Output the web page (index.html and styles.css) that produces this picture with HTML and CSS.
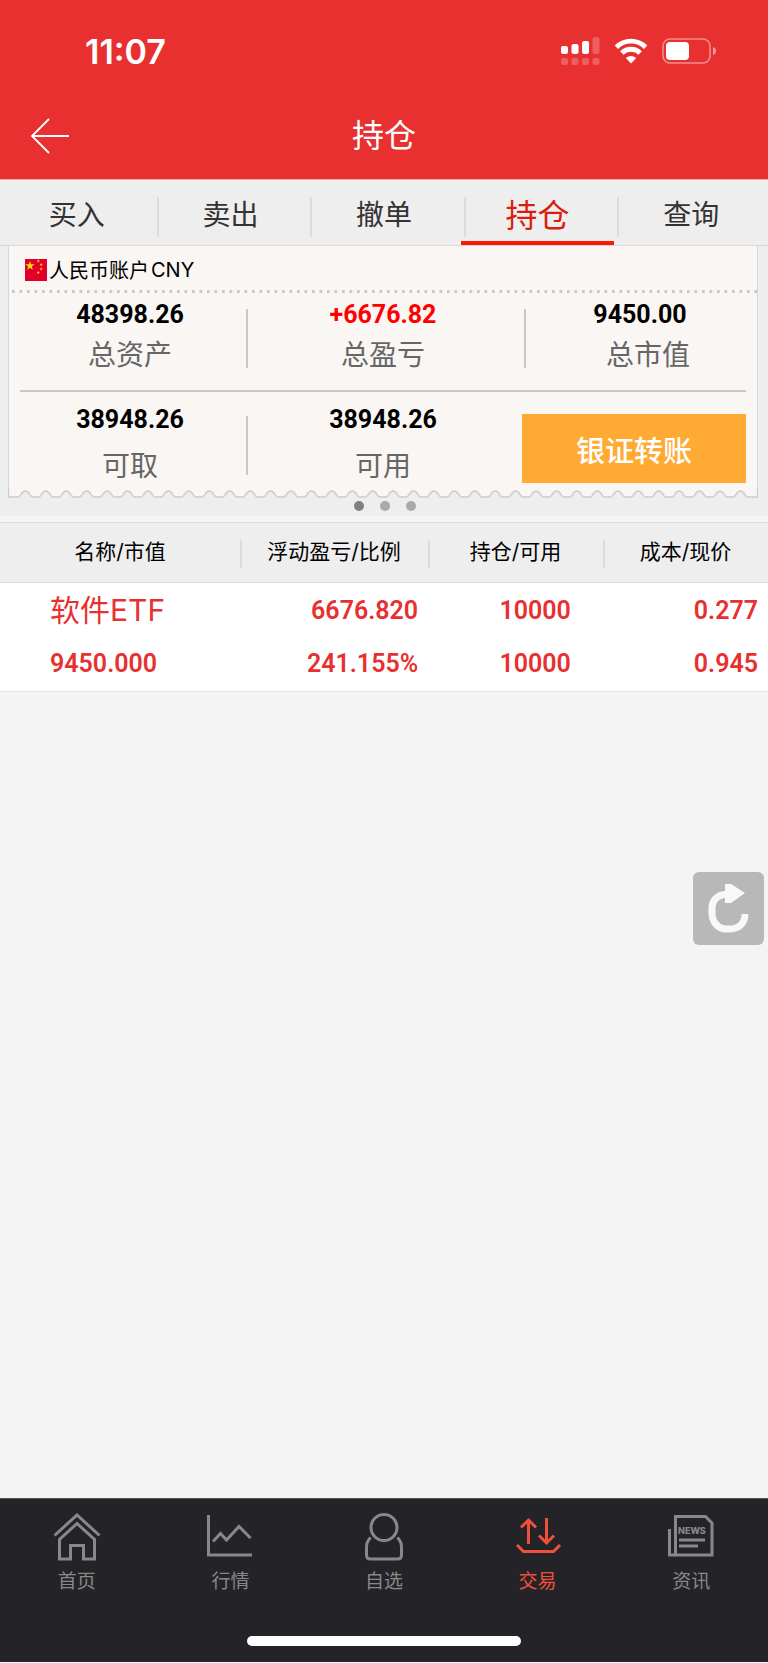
FILE: index.html
```html
<!DOCTYPE html>
<html lang="zh-CN">
<head>
    <meta charset="UTF-8">
    <meta name="viewport" content="width=device-width, initial-scale=1.0">
    <title>持仓</title>

    <link rel="stylesheet" href="styles.css">
</head>
<body>
    <header class="header">
        <div class="statusBar">
            <span class="time">11:07</span>
            <div class="statusIcons">
                <svg width="39" height="28" viewBox="0 0 39 28" fill="#fff">
                    <rect x="0" y="9" width="7" height="8" rx="2"/>
                    <rect x="10.5" y="7" width="7" height="10" rx="2"/>
                    <rect x="21" y="4" width="7" height="13" rx="2"/>
                    <g opacity=".22">
                        <rect x="31.5" y="0" width="7" height="17" rx="2"/>
                        <rect x="0" y="21" width="7" height="7" rx="2"/>
                        <rect x="10.5" y="21" width="7" height="7" rx="2"/>
                        <rect x="21" y="21" width="7" height="7" rx="2"/>
                        <rect x="31.5" y="21" width="7" height="7" rx="2"/>
                    </g>
                </svg>
                <svg width="34" height="26" viewBox="0 0 34 26">
                    <g fill="none" stroke="#fff" stroke-width="4.8">
                        <path d="M2.4 9.2a20.8 20.8 0 0 1 29.2 0"/>
                        <path d="M7.8 15a13.2 13.2 0 0 1 18.4 0"/>
                    </g>
                    <path d="M17 25.4l-5.2-5.3q5.2-4.4 10.4 0z" fill="#fff"/>
                </svg>
                <svg width="54" height="26" viewBox="0 0 54 26">
                    <rect x="1" y="1" width="47" height="24" rx="7" fill="none" stroke="#fff" stroke-width="1.6" opacity=".45"/>
                    <rect x="4" y="4" width="23" height="18" rx="4" fill="#fff"/>
                    <path d="M51 9q3 1.2 3 4t-3 4z" fill="#fff" opacity=".5"/>
                </svg>
            </div>
        </div>
        <div class="titleBar">
            <a href="#" class="back" aria-label="返回">
                <svg width="40" height="36" viewBox="0 0 40 36" fill="none" stroke="#fff" stroke-width="1.8">
                    <path d="M39 18H2M19 1L2 18l17 17"/>
                </svg>
            </a>
            <h1>持仓</h1>
        </div>
    </header>

    <nav class="tabs">
        <a href="#">买入</a>
        <a href="#">卖出</a>
        <a href="#">撤单</a>
        <a href="#" class="on">持仓</a>
        <a href="#">查询</a>
    </nav>

    <main class="content">
        <section class="account">
            <div class="card">
                <div class="cardTitle">
                    <svg width="22" height="22" viewBox="0 0 22 22">
                        <rect width="22" height="22" fill="#e0002b"/>
                        <g fill="#ffe000">
                            <path id="star" d="M5 2l1.1 3.3h3.5L6.8 7.4l1 3.4L5 8.700l-2.800 2.100 1-3.400L.4 5.300h3.500z"/>
                            <use href="#star" transform="translate(11.5 -.4) scale(.36)"/>
                            <use href="#star" transform="translate(14.4 3) scale(.36)"/>
                            <use href="#star" transform="translate(14.4 7.500) scale(.36)"/>
                            <use href="#star" transform="translate(11.5 11) scale(.36)"/>
                        </g>
                    </svg>
                    <span>人民币账户</span>
                    <span>CNY</span>
                </div>
                <svg class="dotLine" height="3">
                    <line x1="3" y1="1.5" x2="100%" y2="1.5" stroke="#c8c8c8" stroke-width="3" stroke-dasharray="2.7 4.8"/>
                </svg>

                <div class="row">
                    <div class="cell">
                        <strong>48398.26</strong>
                        <span>总资产</span>
                    </div>
                    <div class="cell">
                        <strong class="up">+6676.82</strong>
                        <span>总盈亏</span>
                    </div>
                    <div class="cell">
                        <strong>9450.00</strong>
                        <span class="marketLabel">总市值</span>
                    </div>
                </div>
                <div class="row rowBottom">
                    <div class="cell">
                        <strong>38948.26</strong>
                        <span>可取</span>
                    </div>
                    <div class="cell">
                        <strong>38948.26</strong>
                        <span>可用</span>
                    </div>
                    <button type="button" class="transfer">银证转账</button>
                </div>
            </div>
            <!-- 票据锯齿边 -->
            <svg class="edge" viewBox="0 0 749 10" preserveAspectRatio="none">
                <defs>
                    <pattern id="wave" x="7.2" width="20.4" height="10" patternUnits="userSpaceOnUse">
                        <path d="M0 0V8h3c3 0 3-6 7.2-6s4.2 6 7.2 6h3V0z" fill="#faf6f3"/>
                        <path d="M0 8h3c3 0 3-6 7.2-6s4.2 6 7.2 6h3" fill="none" stroke="#ccc" stroke-width="1.6"/>
                    </pattern>
                </defs>
                <rect x="7.2" width="734.4" height="10" fill="url(#wave)"/>
                <path d="M0 0h7.3v8H0zM741.5 0h7.5v8h-7.5z" fill="#faf6f3"/>
                <path d="M7.3 8H.5V0M741.5 8h7V0" fill="none" stroke="#ccc" stroke-width="1.4"/>
            </svg>
            <div class="dots">
                <i class="on"></i>
                <i></i>
                <i></i>
            </div>
        </section>

        <table class="stocks">
            <thead>
                <tr>
                    <th class="name">名称/市值</th>
                    <th class="profit">浮动盈亏/比例</th>
                    <th class="amount">持仓/可用</th>
                    <th class="price">成本/现价</th>
                </tr>
            </thead>
            <tbody>
                <tr>
                    <td class="name"><b>软件ETF</b></td>
                    <td class="profit">6676.820</td>
                    <td class="amount">10000</td>
                    <td class="price">0.277</td>
                </tr>
                <tr>
                    <td class="name">9450.000</td>
                    <td class="profit">241.155%</td>
                    <td class="amount">10000</td>
                    <td class="price">0.945</td>
                </tr>
            </tbody>
        </table>

        <button type="button" class="refresh" aria-label="刷新">
            <svg width="42" height="50" viewBox="0 0 42 50">
                <path d="M18 10.5C9 10.5 4 17 4 24v5c0 9 6 16 14 16h4c9 0 15-6 15-15" fill="none" stroke="#f8f8f8" stroke-width="7"/>
                <path d="M17 0h6l14 9-14 10h-6z" fill="#f8f8f8"/>
            </svg>
        </button>
    </main>

    <footer class="footer">
        <nav class="menu">
            <a href="#">
                <svg width="48" height="48" viewBox="0 0 48 48">
                    <path d="M1.500 22.500L24 2l22.500 20.500M6.500 46V26.500L24 10.500l17.500 16V46h-11V32.500h-13V46z"/>
                </svg>
                <span>首页</span>
            </a>
            <a href="#">
                <svg width="48" height="48" viewBox="0 0 48 48">
                    <path d="M2.500 2v40H46M7 28.500l7.500-8 6 6.500L33 13.500l11.500 11.500"/>
                </svg>
                <span>行情</span>
            </a>
            <a href="#">
                <svg width="48" height="48" viewBox="0 0 48 48">
                    <ellipse cx="24" cy="14.500" rx="13" ry="13"/>
                    <path d="M10.500 24.500Q6.500 29 6.500 34v8q0 4 4 4h27q4 0 4-4v-8q0-5-4-9.500"/>
                </svg>
                <span>自选</span>
            </a>
            <a href="#" class="on">
                <svg width="48" height="48" viewBox="0 0 48 48">
                    <path d="M14.500 31V7M7 14.500L14.500 7l7.500 7.500M32.500 5v24.500M25 22.500l7.500 7.500 7.500-7.500M3 32l6.500 6.500h30L46 32"/>
                </svg>
                <span>交易</span>
            </a>
            <a href="#">
                <svg width="48" height="48" viewBox="0 0 48 48">
                    <path d="M8.500 42V3.500h30l6.500 6.500v32H2.500V16"/>
                    <path d="M12 27h26M12 33h19"/>
                    <text class="news" x="11" y="21">NEWS</text>
                </svg>
                <span>资讯</span>
            </a>
        </nav>
        <div class="homeBar"></div>
    </footer>
</body>
</html>
```
FILE: styles.css
```css
* {
    box-sizing: border-box;
}

body {
    margin: 0;
    min-height: 100vh;
    display: flex;
    flex-direction: column;
    background-color: #f4f4f4;
    font-family: Inter, "Noto Sans CJK SC", sans-serif;
    color: #000;
}

a {
    color: inherit;
    text-decoration: none;
}

svg {
    display: block;
}

button {
    border: 0;
    padding: 0;
    font-family: inherit;
}

/* header */
.header {
    background-color: #e83030;
    color: #fff;
    border-bottom: 1px solid #f4a8a8;
}

.statusBar {
    height: 102px;
    padding: 0 52px 0 85px;
    display: flex;
    align-items: center;
    justify-content: space-between;
}

.time {
    font-size: 34px;
    font-weight: 600;
}

.statusIcons {
    display: flex;
    align-items: center;
    gap: 14px;
}

.titleBar {
    height: 77px;
    padding: 0 30px 10px;
    display: grid;
    grid-template-columns: 1fr auto 1fr;
    align-items: center;
}

.titleBar h1 {
    margin: 0;
    font-size: 32px;
    font-weight: 400;
    line-height: 40px;
}

/* tabs */
.tabs {
    height: 66px;
    display: flex;
    background-color: #eee;
    border-bottom: 1px solid #d8d8d8;
}

.tabs a {
    flex: 1;
    display: flex;
    align-items: center;
    justify-content: center;
    padding-top: 4px;
    font-size: 28px;
    color: #333;
    border-bottom: 4px solid transparent;
}

.tabs a + a {
    background: linear-gradient(#dcdcdc, #dcdcdc) 3px 17px / 2px 40px no-repeat;
}

.tabs a.on {
    font-size: 32px;
    color: #d81e0c;
    border-bottom-color: #ff1800;
}

.content {
    flex: 1;
    position: relative;
}

/* account card */
.account {
    padding: 0 10px 5px 8px;
    background-color: #eee;
}

.card {
    height: 243px;
    background-color: #faf6f3;
    border: 1px solid #d8d8d8;
    border-width: 0 1px;
}

.cardTitle {
    height: 44px;
    padding: 3px 0 0 16px;
    display: flex;
    align-items: center;
    gap: 2px;
    font-size: 20px;
}

.dotLine {
    width: 100%;
}

.row {
    height: 99px;
    margin: 0 11px;
    padding: 8px 0 0;
    display: grid;
    grid-template-columns: 228fr 278fr 220fr;
    border-bottom: 2px solid #c8c8c8;
}

.cell {
    display: flex;
    flex-direction: column;
    align-items: center;
    padding-right: 8px;
    background: linear-gradient(#c8c8c8, #c8c8c8) right 8px / 2px 59px no-repeat;
}

.cell:nth-child(3) {
    padding: 0 0 0 8px;
    background: none;
}

.cell strong {
    font-family: Roboto, sans-serif;
    font-size: 25px;
    font-weight: 700;
    line-height: 28px;
}

.cell strong.up {
    color: #f00;
}

.cell span {
    margin-top: 6px;
    font-size: 28px;
    line-height: 40px;
    color: #666;
}

.rowBottom {
    padding-top: 14px;
    border-bottom: 0;
}

.rowBottom .cell {
    background-position: right 10px;
}

.rowBottom .cell:nth-child(2) {
    background: none;
}

.rowBottom .cell span {
    margin-top: 12px;
}

.cell .marketLabel {
    padding-left: 16px;
}

.transfer {
    height: 69px;
    margin: 8px 0 0 -4px;
    background-color: #ffaa33;
    color: #fff;
    font-size: 29px;
    font-weight: 500;
}

.edge {
    width: 100%;
    height: 10px;
}

.dots {
    margin-top: 2px;
    padding-left: 3px;
    display: flex;
    justify-content: center;
    gap: 16px;
}

.dots i {
    width: 10px;
    height: 10px;
    border-radius: 50%;
    background-color: #aaa;
}

.dots i.on {
    background-color: #808080;
}

/* stock list */
.stocks {
    width: 100%;
    margin-top: 6px;
    border-collapse: separate;
    border-spacing: 0;
    table-layout: fixed;
    background-color: #fff;
    border-bottom: 1px solid #e4e4e4;
}

.stocks th {
    height: 61px;
    padding: 0 0 6px;
    font-size: 21px;
    font-weight: 400;
    text-align: center;
    background-color: #eee;
    border: 1px solid #dcdcdc;
    border-width: 1px 0;
}

.stocks th + th {
    background: linear-gradient(#dcdcdc, #dcdcdc) 0 17px / 2px 28px no-repeat #eee;
}

.stocks th.name {
    width: 31.25%;
}

.stocks th.profit {
    width: 24.5%;
}

.stocks th.amount {
    width: 22.75%;
}

.stocks td {
    height: 54px;
    padding: 2px 0 0 50px;
    font-family: Roboto, "Noto Sans CJK SC", sans-serif;
    font-size: 25px;
    font-weight: 600;
    line-height: 40px;
    color: #e83030;
}

.stocks tbody tr:last-child td {
    padding-top: 0;
}

.stocks td b {
    font-family: Inter, "Noto Sans CJK SC", sans-serif;
    font-size: 30px;
    font-weight: 400;
}

.stocks td.profit,
.stocks td.amount,
.stocks td.price {
    padding-left: 0;
    padding-right: 10px;
    text-align: right;
}

.stocks td.amount {
    padding-right: 32px;
}

/* floats over the list */
.refresh {
    position: absolute;
    top: 626px;
    right: 4px;
    width: 71px;
    height: 73px;
    border-radius: 6px;
    background-color: #b8b8b8;
    display: flex;
    align-items: center;
    justify-content: center;
}

/* footer */
.footer {
    height: 164px;
    margin-bottom: 1px;
    background-color: #242428;
    border-top: 1px solid #555;
    display: flex;
    flex-direction: column;
    align-items: center;
    justify-content: space-between;
}

.menu {
    width: 100%;
    display: flex;
    padding-top: 14px;
}

.menu a {
    flex: 1;
    display: flex;
    flex-direction: column;
    align-items: center;
    gap: 8px;
    font-size: 19px;
    line-height: 26px;
    color: #888;
}

.menu a.on {
    color: #f0503a;
}

.menu svg {
    fill: none;
    stroke: currentColor;
    stroke-width: 3;
}

.menu .news {
    fill: currentColor;
    stroke: none;
    font-size: 9px;
    font-weight: 800;
}

.homeBar {
    width: 274px;
    height: 10px;
    margin-bottom: 16px;
    border-radius: 5px;
    background-color: #fff;
}
```
